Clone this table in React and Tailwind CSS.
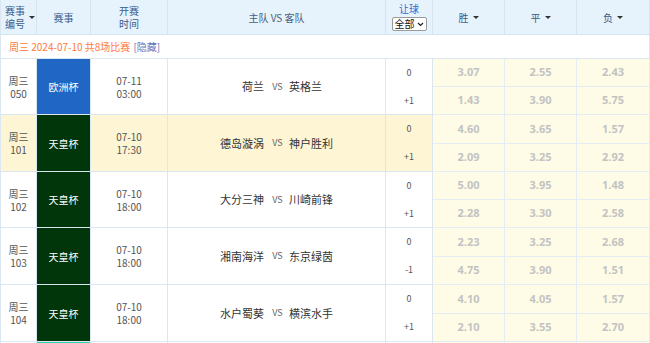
import React from 'react';

const cols = 'grid grid-cols-[36px_54px_77px_218px_47px_72px_72px_73px]';
const cjk = { fontFamily: '"Noto Sans CJK SC", "Noto Sans", sans-serif' };

const matches = [
    { day: '周三', num: '050', league: '欧洲杯', leagueBg: 'bg-[#2067c5]', date: '07-11', time: '03:00', home: '荷兰', away: '英格兰', hcap: ['0', '+1'], odds: [['3.07', '2.55', '2.43'], ['1.43', '3.90', '5.75']], h: 'h-[56px]' },
    { day: '周三', num: '101', league: '天皇杯', leagueBg: 'bg-[#01350a]', date: '07-10', time: '17:30', home: '德岛漩涡', away: '神户胜利', hcap: ['0', '+1'], odds: [['4.60', '3.65', '1.57'], ['2.09', '3.25', '2.92']], h: 'h-[57px]', hot: true },
    { day: '周三', num: '102', league: '天皇杯', leagueBg: 'bg-[#01350a]', date: '07-10', time: '18:00', home: '大分三神', away: '川崎前锋', hcap: ['0', '+1'], odds: [['5.00', '3.95', '1.48'], ['2.28', '3.30', '2.58']], h: 'h-[56px]' },
    { day: '周三', num: '103', league: '天皇杯', leagueBg: 'bg-[#01350a]', date: '07-10', time: '18:00', home: '湘南海洋', away: '东京绿茵', hcap: ['0', '-1'], odds: [['2.23', '3.25', '2.68'], ['4.75', '3.90', '1.51']], h: 'h-[57px]' },
    { day: '周三', num: '104', league: '天皇杯', leagueBg: 'bg-[#01350a]', date: '07-10', time: '18:00', home: '水户蜀葵', away: '横滨水手', hcap: ['0', '+1'], odds: [['4.10', '4.05', '1.57'], ['2.10', '3.55', '2.70']], h: 'h-[57px]' },
];

const Caret = () => (
    <span className="inline-block ml-[4px] w-0 h-0 border-l-[3px] border-r-[3px] border-t-[3px] border-l-transparent border-r-transparent border-t-[#333]" />
);

const MatchRow = ({ m }) => {
    const side = m.hot ? 'bg-[#fdf5d3]' : 'bg-white';
    const cell = 'border-r border-b border-[#dbe7f0] row-span-2';
    return (
        <div className={`${cols} grid-rows-2 ${m.h}`}>
            <div className={`${cell} ${side} flex flex-col items-center justify-center text-[10px] leading-[13px] text-[#555]`}>
                <span>{m.day}</span>
                <span>{m.num}</span>
            </div>
            <div className={`${cell} ${m.leagueBg} flex items-center justify-center text-[10px] text-white`}>
                {m.league}
            </div>
            <div className={`${cell} ${side} flex flex-col items-center justify-center text-[10px] leading-[13px] text-[#555]`}>
                <span>{m.date}</span>
                <span>{m.time}</span>
            </div>
            <div className={`${cell} ${side} flex items-center text-[11px] text-[#333]`}>
                <span className="flex-1 text-right pr-[2px]">{m.home}</span>
                <span className="w-[23px] text-center text-[9px] text-[#666]">VS</span>
                <span className="flex-1 text-left">{m.away}</span>
            </div>
            <div className={`${cell} ${side} flex flex-col text-[9px] text-[#555]`}>
                <span className="flex-1 flex items-center justify-center">{m.hcap[0]}</span>
                <span className="flex-1 flex items-center justify-center">{m.hcap[1]}</span>
            </div>
            {m.odds.flat().map((o, i) => (
                <div
                    key={i}
                    className="border-r border-b border-[#e3edf3] bg-[#fefce6] flex items-center justify-center text-[11px] font-bold text-[#c3c3c3]"
                    style={{ fontFamily: '"Noto Sans", sans-serif' }}
                >
                    {o}
                </div>
            ))}
        </div>
    );
};

const App = () => {
    return (
        <div className="w-[650px] h-[343px] overflow-hidden bg-white" style={cjk}>
            <div className="border-l border-[#dbe7f0]">
                {/* Header */}
                <div className={`${cols} h-[35px] bg-[#e6f3fc] text-[10px] text-[#3b5b8c]`}>
                    <div className="border-r border-b border-[#d4e5f2] flex items-center pl-[4px]">
                        <div className="flex flex-col leading-[13px]">
                            <span>赛事</span>
                            <span>编号</span>
                        </div>
                        <Caret />
                    </div>
                    <div className="border-r border-b border-[#d4e5f2] flex items-center justify-center">赛事</div>
                    <div className="border-r border-b border-[#d4e5f2] flex flex-col items-center justify-center leading-[13px]">
                        <span>开赛</span>
                        <span>时间</span>
                    </div>
                    <div className="border-r border-b border-[#d4e5f2] flex items-center justify-center text-[#4a5d7a]">主队 VS 客队</div>
                    <div className="border-r border-b border-[#d4e5f2] flex flex-col items-center justify-center">
                        <span className="leading-[12px] text-[#3366cc]">让球</span>
                        <div className="mt-[2px] w-[35px] h-[14px] bg-white border border-[#9a9a9a] rounded-[2px] flex items-center justify-between px-[2px] text-[10px] leading-none text-[#111]">
                            <span>全部</span>
                            <svg width="7" height="5" viewBox="0 0 7 5" fill="none">
                                <path d="M1 1l2.5 2.5L6 1" stroke="#222" strokeWidth="1.2" />
                            </svg>
                        </div>
                    </div>
                    {['胜', '平', '负'].map((t) => (
                        <div key={t} className="border-r border-b border-[#d4e5f2] flex items-center justify-center">
                            <span>{t}</span>
                            <Caret />
                        </div>
                    ))}
                </div>

                {/* Date row */}
                <div className="h-[24px] border-r border-b border-[#dbe7f0] flex items-center pl-[8px] text-[10px]">
                    <span className="text-[#ff7a3d]">周三 2024-07-10 共8场比赛</span>
                    <span className="ml-[3px] text-[#6a73b8]">[隐藏]</span>
                </div>

                {/* Matches */}
                {matches.map((m) => (
                    <MatchRow key={m.num} m={m} />
                ))}

                {/* next row, just starting below the fold */}
                <div className={`${cols} h-[20px]`}>
                    <div className="border-r border-[#dbe7f0]" />
                    <div className="bg-[#2fd3aa] border-r border-[#dbe7f0]" />
                    <div className="border-r border-[#dbe7f0]" />
                    <div className="border-r border-[#dbe7f0]" />
                    <div className="border-r border-[#dbe7f0]" />
                    <div className="bg-[#fefce6] border-r border-[#e3edf3]" />
                    <div className="bg-[#fefce6] border-r border-[#e3edf3]" />
                    <div className="bg-[#fefce6] border-r border-[#e3edf3]" />
                </div>
            </div>
        </div>
    );
};

export default App;
